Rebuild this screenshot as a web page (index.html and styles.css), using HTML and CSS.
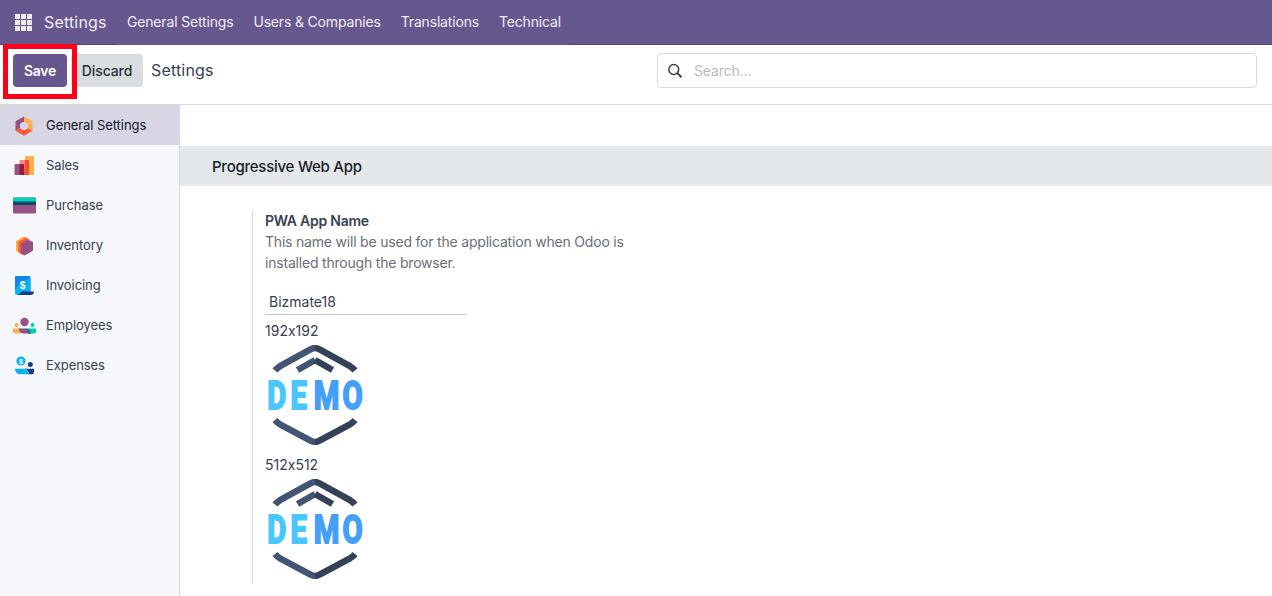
FILE: index.html
```html
<!DOCTYPE html>
<html lang="en">
<head>
<meta charset="utf-8">
<title>Settings</title>
<link rel="stylesheet" href="styles.css">
</head>
<body>
<svg class="defs" width="0" height="0">
  <defs>
    <symbol id="demo-logo" viewBox="0 0 100 100">
      <g fill="none" stroke-width="6.500" stroke-linejoin="round">
        <path stroke="#435575" d="M10 25.500Q12 23 15 21.200L45 4.600Q48 3 50.200 3M10 75Q12 77.500 15 79.300L45 95.400Q48 97 50.200 97M32.500 25L50.200 15"/>
        <path stroke="#344159" d="M50 3Q52 3 55 4.600L85 21.200Q88 23 90 25.500M50 97Q52 97 55 95.400L85 79.300Q88 77.500 90 75M50 15L67.500 25"/>
      </g>
      <text class="demo-text" transform="scale(.76 1)" y="64" x="2.900 33.600 64 102"><tspan fill="#4ac6ff" stroke="#4ac6ff">DE</tspan><tspan fill="#449ff8" stroke="#449ff8">MO</tspan></text>
    </symbol>
  </defs>
</svg>

<header class="navbar">
  <div class="brand">
    <svg width="17" height="17" viewBox="0 0 17 17" fill="#eeecf3"><path d="M0 0h5v5H0zM6 0h5v5H6zM12 0h5v5h-5zM0 6h5v5H0zM6 6h5v5H6zM12 6h5v5h-5zM0 12h5v5H0zM6 12h5v5H6zM12 12h5v5h-5z"/></svg>
    <span class="brand-name">Settings</span>
  </div>
  <nav class="menu">
    <a>General Settings</a><a>Users &amp; Companies</a><a>Translations</a><a>Technical</a>
  </nav>
  <div class="nav-rest"></div>
</header>

<section class="control">
  <button class="btn save">Save</button>
  <button class="btn discard">Discard</button>
  <h1 class="title">Settings</h1>
  <div class="search">
    <svg width="16" height="16" viewBox="0 0 16 16" fill="none" stroke="#374151"><circle cx="6.800" cy="6.500" r="4.900" stroke-width="1.500"/><path d="M10.400 10.100L14.500 14.200" stroke-width="2"/></svg>
    <span>Search...</span>
  </div>
  <div class="highlight"></div>
</section>

<div class="body">
  <aside class="sidebar">
    <a class="tab active">
      <svg viewBox="0 0 24 24"><path fill="#985184" d="M12 2.500L3.500 7.200V16.800L8.300 14V10L12 8z"/><path fill="#fbb04a" d="M12 2.500L20.500 7.200V16.800L15.700 14V10L12 8z"/><path fill="#fc5a35" d="M3.500 16.800L12 21.700L20.500 16.800L15.700 14L12 16L8.300 14z"/><circle cx="12" cy="12" r="4" fill="#d8d5e4"/></svg>
      <span>General Settings</span></a>
    <a class="tab">
      <svg viewBox="0 0 24 24"><rect x="13" y="2" width="9" height="19" rx="1.300" fill="#fbb04a"/><rect x="7.500" y="6" width="9.500" height="15" rx="1" fill="#fc868b"/><path d="M13 6H16q1 0 1 1V20q0 1-1 1H12z" fill="#fc4a2c"/><rect x="2.500" y="10" width="9.500" height="11" rx="1" fill="#985184"/><path d="M7.500 10H11q1 0 1 1V21H7.500z" fill="#921b42"/></svg>
      <span>Sales</span></a>
    <a class="tab">
      <svg viewBox="0 0 24 24"><rect x="1" y="3.500" width="23" height="16" rx="1" fill="#985184"/><path fill="#0c4a66" d="M1 7H24V11H1z"/><path fill="#05d2b5" d="M2 3.500H23q1 0 1 1V7.500H1V4.500q0-1 1-1z"/></svg>
      <span>Purchase</span></a>
    <a class="tab">
      <svg viewBox="0 0 24 24"><path fill="#fbb04a" d="M12 2.500L4 7V16.800L9 20L16 5z"/><path fill="#fc5a35" d="M14 3.600L6.300 8V18.200L11 21L18 6z"/><path fill="#985184" d="M16 5.700L21 8V16.800L12.500 21.500L9 19.500V9.500z"/></svg>
      <span>Inventory</span></a>
    <a class="tab">
      <svg viewBox="0 0 24 24"><path fill="#1286ec" d="M4 2H17q1.500 0 1.500 1.500V17.500L3 19.500V3q0-1 1-1z"/><path fill="#08b1f4" d="M18.500 4.500Q8 6.500 3 16.500V18.500q0 2.500 3 2.500H14L18.500 17.500z"/><path fill="#173b87" d="M9 17.500H22Q21.800 21 18.500 21H5Q8.500 20.500 9 17.500z"/><text x="10.500" y="15.200" text-anchor="middle" class="dollar">$</text></svg>
      <span>Invoicing</span></a>
    <a class="tab">
      <svg viewBox="0 0 24 24"><g fill="#fbb04a"><circle cx="4.500" cy="11" r="2"/><path d="M1 14.500H9.500V19.500H3.500Q1 19.500 1 17z"/></g><g fill="#05cbb1"><circle cx="20.500" cy="11" r="2"/><path d="M15 14.500H24V17Q24 19.500 21.500 19.500H15z"/></g><circle cx="12.500" cy="8" r="4.200" fill="#985184"/><path fill="#985184" d="M6.500 14.500H14L19 19.500H12Q7.500 19.500 6.500 14.500z"/><path fill="#197b88" d="M14 14.500Q18.500 15 19 19.500H16.500Q15.500 16.500 13 14.500z"/></svg>
      <span>Employees</span></a>
    <a class="tab">
      <svg viewBox="0 0 24 24"><circle cx="9" cy="7" r="4.600" fill="#08b1f4"/><text x="9" y="9.500" text-anchor="middle" class="dollar small">$</text><circle cx="18.300" cy="10.500" r="2.500" fill="#173b87"/><path fill="#08b1f4" d="M3 14.800H14L17.500 20.300H8.500Q3.500 20.300 3 14.800z"/><path fill="#173b87" d="M13 14.800H22V18q0 2.300-2 2.300H17Q16.500 16 13 14.800z"/></svg>
      <span>Expenses</span></a>
  </aside>
  <main class="main">
    <h2 class="section">Progressive Web App</h2>
    <div class="setting">
      <h3 class="label">PWA App Name</h3>
      <p class="desc">This name will be used for the application when Odoo is<br>installed through the browser.</p>
      <div class="field">Bizmate18</div>
      <div class="size">192x192</div>
      <svg class="logo"><use href="#demo-logo"/></svg>
      <div class="size second">512x512</div>
      <svg class="logo"><use href="#demo-logo"/></svg>
    </div>
  </main>
</div>
</body>
</html>
```

FILE: styles.css
```css
* { box-sizing: border-box; }
body { margin: 0; height: 596px; overflow: hidden; display: flex; flex-direction: column; background: #fff; color: #374151; font: 14px/21px Inter, sans-serif; }
h1, h2, h3, p { margin: 0; font-weight: 400; }
.defs { display: none; }
.navbar { height: 45px; display: flex; background: #66578f; color: #f0eef5; flex: none; }
.brand { width: 117px; padding-left: 15px; display: flex; align-items: center; gap: 12px; border-bottom: 1px solid #554678; }
.brand-name { font-size: 16px; letter-spacing: .17px; }
.menu { width: 452px; padding: 0 0 2px 10px; display: flex; align-items: center; gap: 20px; white-space: nowrap; letter-spacing: -.17px; }
.nav-rest { flex: 1; border-bottom: 1px solid #554678; }
.control { position: relative; height: 60px; flex: none; display: flex; align-items: flex-start; padding: 9px 15px 0 13px; border-bottom: 1px solid #d8dadd; }
.btn { height: 33px; border: 0; border-radius: 4px; padding: 0; font: 500 14px/33px Inter, sans-serif; }
.save { width: 54px; background: #66578f; color: #fff; font-weight: 600; letter-spacing: -.25px; }
.discard { width: 72px; margin-left: 4px; background: #d8dde1; color: #2b3138; letter-spacing: -.1px; }
.title { margin-left: 8px; font-size: 16px; line-height: 33px; letter-spacing: .17px; }
.search { margin-left: auto; margin-top: -1px; width: 600px; height: 35px; display: flex; align-items: center; gap: 11px; padding-left: 9px; border: 1px solid #d8dadd; border-radius: 4px; color: #b2bdc6; letter-spacing: -.15px; }
.highlight { position: absolute; left: 3px; top: -1px; width: 74px; height: 55px; border: 5px solid #ff0018; }
.body { flex: 1; display: flex; min-height: 0; }
.sidebar { width: 180px; background: #f6f7fa; border-right: 1px solid #d8dadd; }
.tab { height: 40px; display: flex; align-items: center; gap: 10px; padding: 1px 0 0 12px; font-size: 13px; letter-spacing: -.07px; }
.tab svg { width: 24px; height: 24px; }
.tab.active { background: #d8d5e4; color: #111827; }
.main { flex: 1; padding-top: 41px; }
.section { height: 40px; padding-left: 32px; background: #e4e8eb; font-size: 15px; line-height: 41px; font-weight: 500; letter-spacing: -.25px; color: #1b2028; }
.setting { margin: 24px 0 0 72px; height: 374px; border-left: 1px solid #d8dadd; padding-left: 12px; }
.label { font-size: 14px; font-weight: 600; line-height: 21px; letter-spacing: -.25px; }
.desc { color: #696f78; letter-spacing: -.2px; }
.field { width: 201px; margin-top: 16px; height: 26px; border-bottom: 1px solid #c2c4c5; padding-left: 4px; line-height: 26px; }
.size { margin-top: 5px; font-feature-settings: "calt" 0; letter-spacing: 0; }
.logo { display: block; width: 100px; height: 100px; margin-top: 4px; }
.size.second { margin-top: 9px; }
.demo-text { font: 700 38.500px Roboto, sans-serif; stroke-width: 2px; letter-spacing: 0; }
.dollar { font: 700 10px "Liberation Sans", sans-serif; fill: #fff; }
.dollar.small { font-size: 7px; }
```
